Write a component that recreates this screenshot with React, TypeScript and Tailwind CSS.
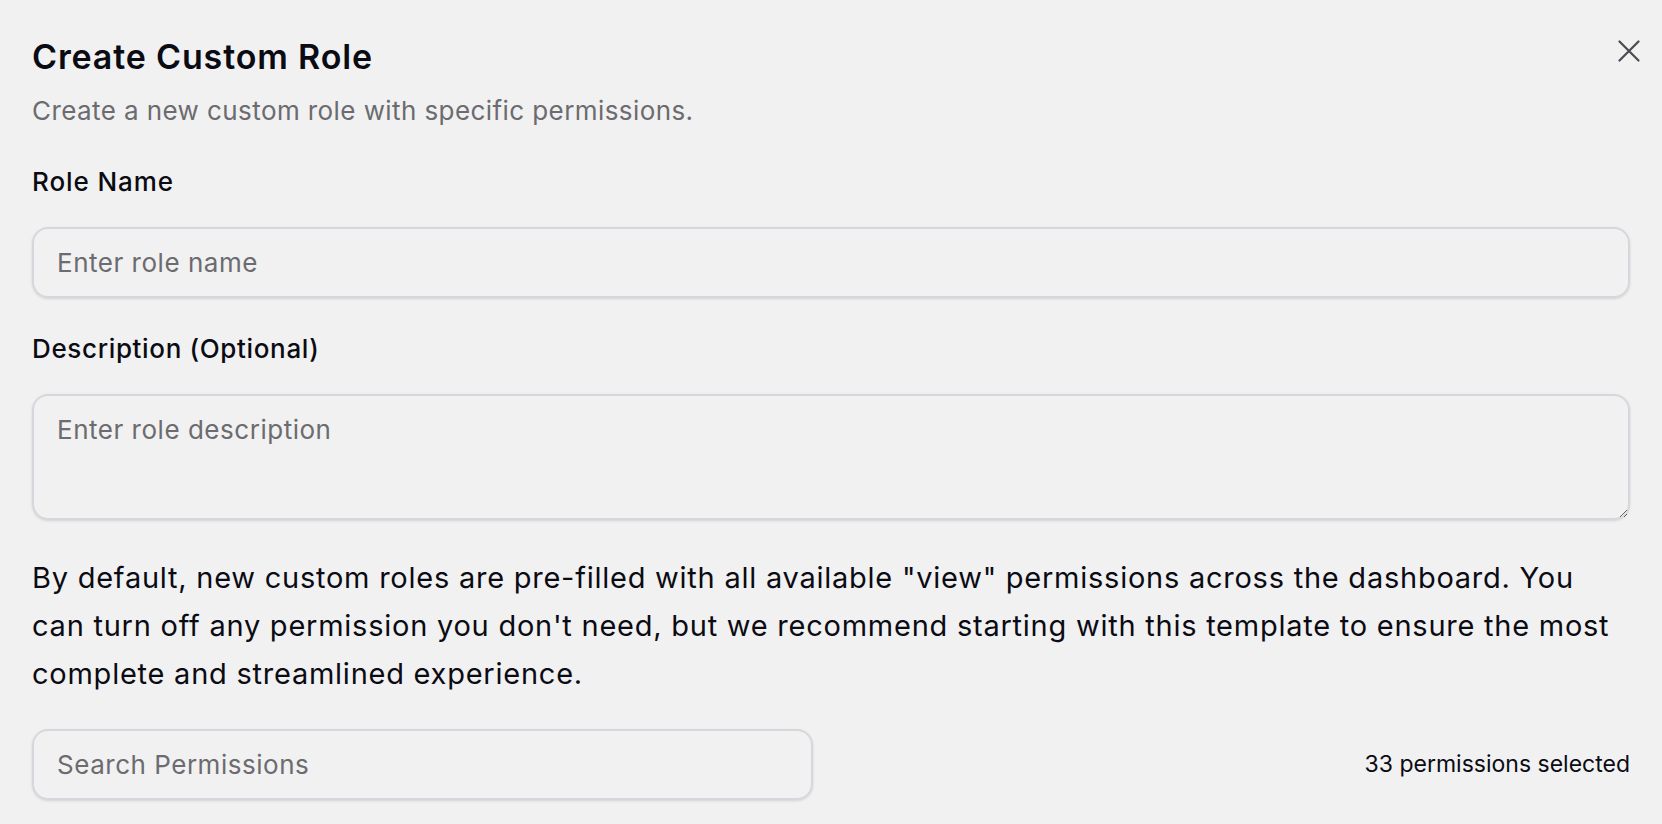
import { useState } from "react";

const CloseIcon = () => (
  <svg width="22" height="22" viewBox="0 0 22 22" fill="none">
    <path
      d="M1.5 1.5L20.5 20.5M20.5 1.5L1.5 20.5"
      stroke="#4a4b53"
      strokeWidth="2.2"
      strokeLinecap="round"
    />
  </svg>
);

const App = () => {
  const [name, setName] = useState("");
  const [description, setDescription] = useState("");
  const [search, setSearch] = useState("");

  return (
    <div className="relative min-h-screen bg-[#f1f1f1] px-[32px] pt-[37px] font-['Inter','Liberation_Sans',sans-serif] text-[#0b0b14]">
      <button className="absolute right-[22px] top-[40px] p-0" aria-label="Close">
        <CloseIcon />
      </button>

      <header className="flex flex-col gap-[16px]">
        <h1 className="text-[34px] font-semibold leading-[40px] tracking-[0.025em]">
          Create Custom Role
        </h1>
        <p className="text-[26px] leading-[36px] tracking-[0.016em] text-[#6b6b70]">
          Create a new custom role with specific permissions.
        </p>
      </header>

      <div className="mt-[35px] flex flex-col gap-[27px]">
        <label className="text-[26px] font-medium leading-[36px] tracking-[0.035em]">
          Role Name
        </label>
        <input
          value={name}
          onChange={(e) => setName(e.target.value)}
          placeholder="Enter role name"
          className="h-[71px] w-full rounded-[16px] border-2 border-[#d5d7dc] bg-transparent px-[23px] text-[26px] tracking-[0.02em] shadow-sm outline-none placeholder:text-[#6b6b70]"
        />
      </div>

      <div className="mt-[33px] flex flex-col gap-[27px]">
        <label className="text-[26px] font-medium leading-[36px] tracking-[0.025em]">
          Description (Optional)
        </label>
        <textarea
          value={description}
          onChange={(e) => setDescription(e.target.value)}
          placeholder="Enter role description"
          className="block h-[126px] w-full rounded-[16px] border-2 border-[#d5d7dc] bg-transparent px-[23px] py-[16px] text-[26px] leading-[36px] tracking-[0.02em] shadow-sm outline-none placeholder:text-[#6b6b70]"
        />
      </div>

      <p className="mt-[34px] whitespace-nowrap text-[29px] leading-[48px] tracking-[0.026em]">
        By default, new custom roles are pre-filled with all available "view"
        permissions across the dashboard. You
        <br />
        can turn off any permission you don't need, but we recommend starting
        with this template to ensure the most
        <br />
        complete and streamlined experience.
      </p>

      <div className="mt-[31px] flex items-center justify-between">
        <input
          value={search}
          onChange={(e) => setSearch(e.target.value)}
          placeholder="Search Permissions"
          className="h-[71px] w-[781px] rounded-[16px] border-2 border-[#d5d7dc] bg-transparent px-[23px] text-[26px] tracking-[0.02em] shadow-sm outline-none placeholder:text-[#6b6b70]"
        />
        <span className="text-[23px]">33 permissions selected</span>
      </div>
    </div>
  );
};

export default App;
